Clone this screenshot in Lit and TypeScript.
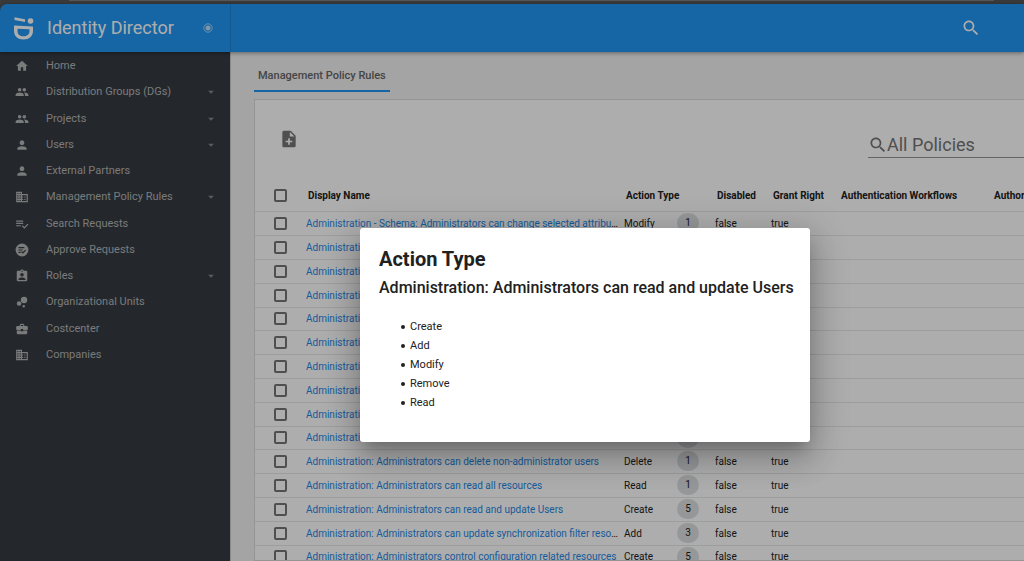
import { LitElement, html, css, svg } from "lit";
import { customElement, state } from "lit/decorators.js";

const icons: Record<string, string> = {
  home: "M10 20v-6h4v6h5v-8h3L12 3 2 12h3v8z",
  group: "M16 11c1.66 0 2.99-1.34 2.99-3S17.66 5 16 5s-3 1.34-3 3 1.34 3 3 3zm-8 0c1.66 0 2.99-1.34 2.99-3S9.66 5 8 5 5 6.34 5 8s1.34 3 3 3zm0 2c-2.33 0-7 1.17-7 3.5V19h14v-2.500C15 14.170 10.330 13 8 13zm8 0c-.29 0-.62.02-.97.05 1.160.84 1.970 1.970 1.970 3.450V19h6v-2.500c0-2.330-4.670-3.500-7-3.500z",
  person: "M12 12c2.210 0 4-1.790 4-4s-1.790-4-4-4-4 1.790-4 4 1.790 4 4 4zm0 2c-2.670 0-8 1.340-8 4v2h16v-2c0-2.660-5.330-4-8-4z",
  building: "M12 7V3H2v18h20V7H12zM6 19H4v-2h2v2zm0-4H4v-2h2v2zm0-4H4V9h2v2zm0-4H4V5h2v2zm4 12H8v-2h2v2zm0-4H8v-2h2v2zm0-4H8V9h2v2zm0-4H8V5h2v2zm10 12h-8v-2h2v-2h-2v-2h2v-2h-2V9h8v10zm-2-8h-2v2h2v-2zm0 4h-2v2h2v-2z",
  listCheck: "M14 6H2v2h12V6zm0 4H2v2h12v-2zM2 16h8v-2H2v2zm19.500-4.500L23 13l-7 7-4.500-4.500L13 14l3 3z",
  approve: "M12 1a11 11 0 1 0 0 22 11 11 0 0 0 0-22zM6 7v2h10V7zm0 4v2h7v-2zm0 4v2h4v-2zm11.500-3.500L19 13l-5.500 5.500L10.500 15.500 12 14l1.500 1.500z",
  badge: "M19 3h-4.180C14.400 1.840 13.300 1 12 1s-2.400.84-2.820 2H5c-1.100 0-2 .9-2 2v14c0 1.100.9 2 2 2h14c1.100 0 2-.9 2-2V5c0-1.100-.9-2-2-2zm-7 0c.55 0 1 .45 1 1s-.45 1-1 1-1-.45-1-1 .45-1 1-1zm0 4c1.660 0 3 1.340 3 3s-1.340 3-3 3-3-1.340-3-3 1.340-3 3-3zm6 12H6v-1.400c0-2 4-3.100 6-3.100s6 1.100 6 3.100V19z",
  bubbles: "M7 10.500a4 4 0 1 0 0 8 4 4 0 0 0 0-8zM15.500 3a5.500 5.500 0 1 0 0 11 5.500 5.500 0 0 0 0-11zM15 17a2.200 2.200 0 1 0 0 4.400 2.200 2.200 0 0 0 0-4.400z",
  briefcase: "M10 16v-1H3.010L3 19c0 1.110.89 2 2 2h14c1.110 0 2-.89 2-2v-4h-7v1h-4zm10-9h-4.010V5l-2-2h-4l-2 2v2H4c-1.100 0-2 .9-2 2v3c0 1.110.89 2 2 2h6v-2h4v2h6c1.100 0 2-.9 2-2V9c0-1.100-.9-2-2-2zm-6 0h-4V5h4v2z",
  noteAdd: "M14 2H6c-1.100 0-1.990.9-1.990 2L4 20c0 1.100.89 2 1.990 2H18c1.100 0 2-.9 2-2V8l-6-6zm2 14h-3v3h-2v-3H8v-2h3v-3h2v3h3v2zm-3-7V3.500L18.500 9H13z",
  search: "M15.500 14h-.79l-.28-.27C15.410 12.590 16 11.110 16 9.500 16 5.910 13.090 3 9.500 3S3 5.910 3 9.500 5.910 16 9.500 16c1.610 0 3.090-.59 4.230-1.570l.27.28v.79l5 4.990L20.490 19l-4.990-5zm-6 0C7.010 14 5 11.990 5 9.500S7.010 5 9.500 5 14 7.010 14 9.500 11.990 14 9.500 14z",
  arrow: "M7 10l5 5 5-5z",
};

const icon = (name: string, cls: string) => html`<svg class=${cls} viewBox="0 0 24 24" aria-hidden="true">${svg`<path fill-rule="evenodd" d=${icons[name]} />`}</svg>`;

const nav = [
  { label: "Home", icon: "home" },
  { label: "Distribution Groups (DGs)", icon: "group", more: true },
  { label: "Projects", icon: "group", more: true },
  { label: "Users", icon: "person", more: true },
  { label: "External Partners", icon: "person" },
  { label: "Management Policy Rules", icon: "building", more: true },
  { label: "Search Requests", icon: "listCheck" },
  { label: "Approve Requests", icon: "approve" },
  { label: "Roles", icon: "badge", more: true },
  { label: "Organizational Units", icon: "bubbles" },
  { label: "Costcenter", icon: "briefcase" },
  { label: "Companies", icon: "building" },
];

interface Rule { name: string; action: string; count: number }
const covered: Rule[] = Array.from({ length: 9 }, () => ({ name: "Administration", action: "", count: 1 }));
const rules: Rule[] = [
  { name: "Administration - Schema: Administrators can change selected attributes", action: "Modify", count: 1 },
  ...covered,
  { name: "Administration: Administrators can delete non-administrator users", action: "Delete", count: 1 },
  { name: "Administration: Administrators can read all resources", action: "Read", count: 1 },
  { name: "Administration: Administrators can read and update Users", action: "Create", count: 5 },
  { name: "Administration: Administrators can update synchronization filter resources", action: "Add", count: 3 },
  { name: "Administration: Administrators control configuration related resources", action: "Create", count: 5 },
];

@customElement("app-root")
export class AppRoot extends LitElement {
  @state() private actions = ["Create", "Add", "Modify", "Remove", "Read"];

  static styles = css`
    :host { display: block; position: relative; height: 100vh; overflow: hidden; background: #565656; font: 11px/16px Roboto, sans-serif; color: #212121; }
    * { box-sizing: border-box; }
    svg { display: block; fill: currentColor; flex: none; }
    button, input { font: inherit; color: inherit; border: 0; padding: 0; margin: 0; background: none; }
    a { text-decoration: none; color: inherit; }
    .shell { height: 100%; display: flex; flex-direction: column; }
    .strip { height: 4px; flex: none; padding: 0 30px 0 69px; }
    .strip-bar { height: 1px; background: #808080; }
    .top { height: 48px; flex: none; display: flex; align-items: center; background: #2196f3; border-radius: 7px 0 0 0; color: #fff; position: relative; box-shadow: 0 1px 4px rgba(0,0,0,.4); z-index: 1; }
    .brand { width: 231px; height: 100%; flex: none; display: flex; align-items: center; padding: 0 17px 0 13px; border-right: 1px solid #1c85d9; }
    .logo { width: 21px; height: 24px; margin-right: 13px; }
    .title { font-size: 18px; line-height: 24px; font-weight: 400; margin: 0; flex: 1; }
    .pin { width: 10px; height: 10px; opacity: .7; }
    .pin svg { width: 10px; height: 10px; }
    .top-tools { flex: 1; display: flex; justify-content: flex-end; padding-right: 43px; }
    .i20 { width: 20px; height: 20px; }
    .body { flex: 1; min-height: 0; display: flex; }
    .side { width: 230px; flex: none; background: #363b42; color: #b4b5b6; padding-top: 1px; }
    .menu { list-style: none; margin: 0; padding: 0; }
    .menu li:nth-child(4n + 2) { padding-bottom: 1px; }
    .link { height: 26px; display: flex; align-items: center; padding: 0 12px 0 15px; }
    .nav-icon { width: 14px; height: 14px; margin-right: 17px; }
    .label { flex: 1; }
    .caret { width: 14px; height: 14px; color: #85888c; }
    .main { flex: 1; min-width: 0; background: #f2f2f2; padding: 12px 0 0 23px; overflow: hidden; display: flex; flex-direction: column; border-left: 1px solid #ccc; }
    .tab { align-self: flex-start; height: 28px; padding: 0 4px; line-height: 24px; font-weight: 500; color: #666; border-bottom: 2px solid #2196f3; }
    .card { margin-top: 7px; flex: 1; min-height: 0; background: #fff; border: 1px solid #dcdcdc; border-right: 0; overflow: hidden; }
    .tools { height: 80px; display: flex; align-items: center; padding: 0 0 3px 24px; justify-content: space-between; }
    .add { color: #757575; }
    .search { width: 156px; height: 28px; margin-top: 11px; padding-top: 2px; display: flex; align-items: center; border-bottom: 1px solid #949494; color: #757575; }
    .search svg { margin-right: -1px; }
    .search input { flex: 1; min-width: 0; font-size: 18px; line-height: 24px; outline: 0; height: 24px; }
    .search input::placeholder { color: #757575; opacity: 1; }
    table { border-collapse: collapse; table-layout: fixed; width: 838px; font-size: 10px; line-height: 15px; }
    .c-check { width: 51px; } .c-name { width: 318px; } .c-action { width: 91px; } .c-dis { width: 56px; }
    .c-grant { width: 68px; } .c-authn { width: 153px; }
    th, td { padding: 0; text-align: left; border-bottom: 1px solid #e8e8e8; white-space: nowrap; height: 24px; }
    th { height: 31px; font-weight: 700; padding-left: 2px; }
    tbody tr:nth-child(5n) td { height: 23px; }
    th:first-child, td:first-child { padding-left: 19px; }
    .check { appearance: none; display: block; width: 13px; height: 13px; border: 2px solid #757575; border-radius: 2px; }
    .name { width: 314px; overflow: hidden; text-overflow: ellipsis; }
    .name a { color: #1e88e5; }
    .action { display: flex; align-items: center; }
    .verb { width: 53px; }
    .count { width: 22px; height: 20px; line-height: 20px; border-radius: 10px; text-align: center; background: #dcdfe2; }
    .scrim { position: absolute; inset: 0; background: rgba(0,0,0,.32); z-index: 2; padding: 228px 0 0 360px; }
    .dialog { width: max-content; background: #fff; border-radius: 3px; padding: 19px 16px 30px 19px; box-shadow: 0 9px 12px -5px rgba(0,0,0,.2), 0 18px 30px 2px rgba(0,0,0,.14), 0 7px 36px 6px rgba(0,0,0,.16); }
    .dialog h2 { margin: 0; font-size: 20px; line-height: 24px; font-weight: 700; }
    .dialog h3 { margin: 6px 0 18px; font-size: 16px; line-height: 22px; font-weight: 500; }
    .dialog ul { margin: 0; padding-left: 22px; line-height: 19px; list-style: none; }
    .dialog li { display: flex; align-items: center; gap: 5px; }
    .dialog li::before { content: ""; width: 4px; height: 4px; border-radius: 2px; background: #212121; }
  `;

  render() {
    return html`
      <div class="shell">
        <div class="strip"><div class="strip-bar"></div></div>
        <header class="top">
          <div class="brand">
            <svg class="logo" viewBox="0 0 21 24"><path d="M1.500 1.200l10.500 2v2.800l-10.500-2z"/><circle cx="17.500" cy="5" r="2.800"/><path fill-rule="evenodd" d="M1 9.500l19 1V15c0 5-4 8.500-9.500 8.500S1 20 1 15zm3.500 3.200v2.500c0 3 2.500 5 6 5s6-2 6-5v-1.900z"/></svg>
            <h1 class="title">Identity Director</h1>
            <button class="pin" aria-label="Pin menu"><svg viewBox="0 0 12 12"><circle cx="6" cy="6" r="5" fill="none" stroke="currentColor"/><circle cx="6" cy="6" r="3"/></svg></button>
          </div>
          <div class="top-tools"><button aria-label="Search">${icon("search", "i20")}</button></div>
        </header>
        <div class="body">
          <nav class="side"><ul class="menu">
            ${nav.map(n => html`<li><a class="link" href="#">${icon(n.icon, "nav-icon")}<span class="label">${n.label}</span>${n.more ? icon("arrow", "caret") : ""}</a></li>`)}
          </ul></nav>
          <main class="main">
            <a class="tab" href="#">Management Policy Rules</a>
            <section class="card">
              <div class="tools">
                <button class="add" aria-label="Add rule">${icon("noteAdd", "i20")}</button>
                <label class="search">${icon("search", "i20")}<input type="text" aria-label="Policies" placeholder="All Policies"></label>
              </div>
              <table>
                <colgroup><col class="c-check"><col class="c-name"><col class="c-action"><col class="c-dis"><col class="c-grant"><col class="c-authn"><col></colgroup>
                <thead><tr>
                  <th><input class="check" type="checkbox" aria-label="Select all"></th>
                  <th>Display Name</th><th>Action Type</th><th>Disabled</th><th>Grant Right</th><th>Authentication Workflows</th><th>Authorization Workflows</th>
                </tr></thead>
                <tbody>${rules.map(r => html`<tr>
                  <td><input class="check" type="checkbox" aria-label=${r.name}></td>
                  <td><div class="name"><a href="#">${r.name}</a></div></td>
                  <td><div class="action"><span class="verb">${r.action}</span><span class="count">${r.count}</span></div></td>
                  <td>false</td><td>true</td><td></td><td></td>
                </tr>`)}</tbody>
              </table>
            </section>
          </main>
        </div>
      </div>
      <div class="scrim">
        <div class="dialog" role="dialog" aria-modal="true" aria-labelledby="heading">
          <h2 id="heading">Action Type</h2>
          <h3>Administration: Administrators can read and update Users</h3>
          <ul>${this.actions.map(a => html`<li>${a}</li>`)}</ul>
        </div>
      </div>`;
  }
}
